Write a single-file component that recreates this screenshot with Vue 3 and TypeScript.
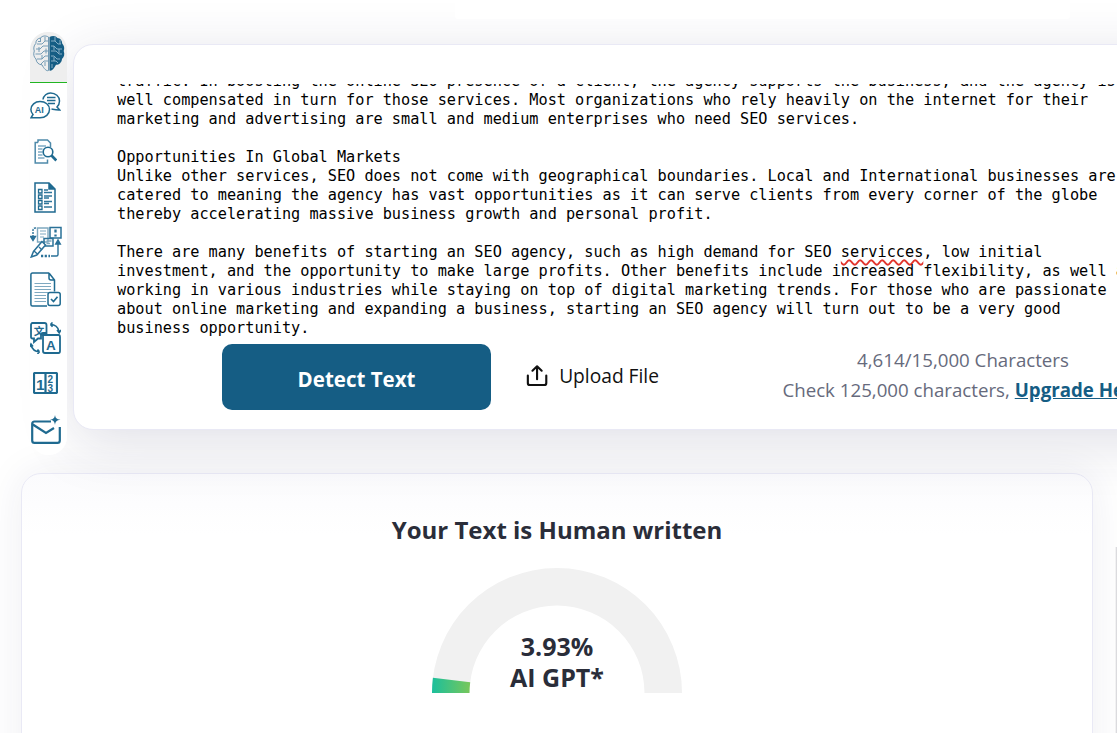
<script setup lang="ts">
const gaugeValue = 3.93
</script>

<template>
  <div class="page">
    <div class="topstrip"></div>
    <div class="edge"></div>
    <div class="top-row">
      <aside class="rail">
        <div class="logo-tab">
          <svg class="logo" viewBox="0 0 32 37" fill="none">
            <path d="M15.500 2C12.500 .3 9 .8 7.500 3C4.500 3.300 2.800 5.500 2.800 8.500C.8 10.500 .3 13.500 1.300 16C.1 19 .8 22 3 24C3.300 27.500 5.800 29.800 9 29.800C10.800 33.500 13.500 36.500 15.500 35.500Z" stroke="#7199b3" stroke-width="1"/>
            <path d="M4 9H9L12 6H15M3 14H7L10 11H15M2.500 19H8L11 16H15M4 24H9L12 21H15M8 29L11 26H15M7.500 3V7M12 2V6M6 12V17M9 20V24M12 27V31M5 6.500H7M13 13.500V18.500" stroke="#7199b3" stroke-width=".95"/>
            <path d="M16.500 2C19.500 .3 23 .8 24.500 3C27.500 3.300 29.200 5.500 29.200 8.500C31.200 10.500 31.700 13.500 30.700 16C31.900 19 31.200 22 29 24C28.700 27.500 26.200 29.800 23 29.800C21.200 33.500 18.500 36.500 16.500 35.500Z" fill="#155d84"/>
            <path d="M18 6H22L25 9H28M18 11H21L24 14H29M18 16H23L26 19H29M18 21H21L24 24H27M18 26H23L25 28M22 2V6M27 5V9M21 11V15M26 14V18M21 22V26M19 29V33" stroke="#9dbfd2" stroke-width=".85"/>
          </svg>
        </div>
        <svg class="ico i-ai" viewBox="0 0 31 27" fill="none" stroke="#1f6a90" stroke-width="1.500">
          <path d="M13 7.500C13.500 3.500 17 1 20.500 1C25.500 1 29.500 4.500 29.500 9C29.500 11.500 28.500 13.500 27 15L29.800 18C26.500 18.200 24 17.500 21.500 17" />
          <path d="M17 5.500H25.500M17 8.500H25.500M18 11.500H25" stroke-width="1.400" />
          <path d="M10 9.500C15.500 9.500 19.500 12.800 19.500 17.500C19.500 22 15.500 25.800 10 25.800H1L3 22.500C1.500 21 .9 19.500 .9 17.500C.9 13 5 9.500 10 9.500Z" />
          <text x="4.700" y="21" font-size="9" font-weight="700" fill="#1f6a90" stroke="none" font-family="Liberation Sans, sans-serif">AI</text>
        </svg>
        <svg class="ico i-search" viewBox="0 0 23 25" fill="none" stroke="#4f8aaa" stroke-width="1.500">
          <path d="M4 3.500V1H13.500L16.500 4V8M4 3.500H1.200V24H13.500V20.500" />
          <path d="M4 7H12M4 10H8.500M4 13H8.500M4 16H8.500M4 19H10.500" stroke="#7fabc3" stroke-width="1.300" />
          <circle cx="14" cy="13" r="4.800" stroke="#1f6a90" stroke-width="1.600" />
          <path d="M17.500 16.500L22.300 21.500" stroke="#1f6a90" stroke-width="2.600" />
        </svg>
        <svg class="ico i-list" viewBox="0 0 22 31" fill="none" stroke="#1f6a90" stroke-width="1.500">
          <path d="M1 1H15L21 7V30H1Z" />
          <path d="M15 1V7H21" fill="#1f6a90" />
          <path d="M4.500 7.500H8V11H4.500ZM4.500 13H8V16.500H4.500ZM4.500 18.500H8V22H4.500ZM4.500 24H8V27.500H4.500Z" stroke-width="1.300" />
          <path d="M10 8H14M10 10.500H18M10 14H18M10 16H15M10 19.500H18M10 21.500H15M10 25H18" stroke="#2f769b" stroke-width="1.300" />
        </svg>
        <svg class="ico i-flow" viewBox="0 0 32 32" fill="none" stroke="#2a7198" stroke-width="1.400">
          <path d="M3 11V4C3 3 3.800 2 5 2H7" stroke-dasharray="2 1" />
          <path d="M.5 10.500L3 14.500L5.500 10.500Z" fill="#2a7198" />
          <path d="M7.500 2H18V16H7.500Z" stroke="#7fa9c0" />
          <path d="M10 5H16M10 8H16M10 11H14" stroke="#a9c6d6" stroke-width="1.600" />
          <path d="M20 1.500H31V12H20Z" stroke-width="1.500" />
          <path d="M25.500 3.500V6.500M25.500 8.500V10.500" stroke-width="2.300" />
          <path d="M14 12.500H23V20H14Z" stroke-width="1.500" />
          <path d="M16.500 15H21.500M16.500 17.500H20" stroke="#7fa9c0" />
          <path d="M12 15.500L3.500 25.500L1.200 31L6.800 29L15.500 19Z" stroke-width="1.500" fill="#fff" />
          <path d="M4 25L8 28.500M9 21L12 24" />
          <path d="M28 17V28.500C28 29.500 27.500 30 26.500 30H21" />
          <path d="M25.700 18L28 14L30.300 18Z" fill="#2a7198" />
          <path d="M11 30H20" stroke-width="2.600" stroke-dasharray="2.200 1.500" />
        </svg>
        <svg class="ico i-check" viewBox="0 0 31 35" fill="none" stroke="#1f6a90" stroke-width="1.500">
          <path d="M19 1H2.500C1.500 1 .9 1.800 .9 2.800V32.500C.9 33.400 1.500 34 2.500 34H17" />
          <path d="M19 1L24.500 8V19.500M19 1V6C19 7.200 19.800 8 21 8H24.500" />
          <path d="M4.500 11.500H21M4.500 14.500H21M4.500 17.500H21M4.500 20.500H18M4.500 23.500H16M4.500 26.500H16M4.500 29.500H16" stroke="#7fa9c0" stroke-width="1.100" />
          <rect x="18" y="20.500" width="12.200" height="13" rx="2" />
          <path d="M21 27L23.500 29.500L27.500 24.800" stroke-width="1.700" />
        </svg>
        <svg class="ico i-trans" viewBox="0 0 31 32" fill="none" stroke="#1f6a90" stroke-width="1.800">
          <path d="M2.500 1H14.500C15.500 1 16.500 2 16.500 3V11H13C12 11 11 12 11 13V16.500H8L4 20V16.500H2.500C1.500 16.500 1 16 1 15V3C1 2 1.500 1 2.500 1Z" />
          <text x="3.800" y="13" font-size="10.500" font-weight="700" fill="#1f6a90" stroke="none" font-family="Noto Sans CJK SC, sans-serif">文</text>
          <path d="M13 13H28.500C29.500 13 30 14 30 15V29C30 30 29.500 31 28.500 31H15C14 31 13 30 13 29Z" />
          <text x="16" y="27.500" font-size="13.500" font-weight="700" fill="#1f6a90" stroke="none" font-family="Liberation Sans, sans-serif">A</text>
          <path d="M20.500 2.500C24.500 2.500 28 5 29 9.500M27 8L29.200 10.800L31 8M20.500 2.500L22.500 .5M20.500 2.500L22.500 4.800" stroke-width="1.600" />
          <path d="M1 23C2 27 5 29.500 9.500 29.800M-.4 25L1 22L3 24.500M9.500 29.800L7.500 27.500M9.500 29.800L7.500 32" stroke-width="1.600" />
        </svg>
        <svg class="ico i-num" viewBox="0 0 25 22" fill="none" stroke="#1f6a90" stroke-width="2.200">
          <rect x="1" y="1" width="23" height="20" rx="1" />
          <path d="M12.500 1V21" />
          <text x="3" y="18" font-size="15.500" font-weight="700" fill="#1f6a90" stroke="none" font-family="Liberation Sans, sans-serif">1</text>
          <text x="14.500" y="11" font-size="10" fill="#1f6a90" stroke="none" font-weight="700" font-family="Liberation Sans, sans-serif">2</text>
          <text x="14.500" y="20" font-size="10" fill="#1f6a90" stroke="none" font-weight="700" font-family="Liberation Sans, sans-serif">3</text>
        </svg>
        <svg class="ico i-mail" viewBox="0 0 30 29" fill="none" stroke="#1f6a90" stroke-width="2.200">
          <path d="M20 6.500H3.500C2 6.500 1.200 7.500 1.200 9V25.500C1.200 27 2 27.900 3.500 27.900H26.500C28 27.900 28.800 27 28.800 25.500V12" />
          <path d="M1.800 9.500L15 18L23 13" />
          <path d="M24 0C24.500 3 25.500 4 29.500 4.800C25.500 5.500 24.500 6.500 24 10C23.500 6.500 22.500 5.500 19 4.800C22.500 4 23.500 3 24 0Z" fill="#1f6a90" stroke="none" />
        </svg>
      </aside>

      <section class="editor-card">
        <div class="editor"><pre class="text">traffic. In boosting the online SEO presence of a client, the agency supports the business, and the agency is
well compensated in turn for those services. Most organizations who rely heavily on the internet for their
marketing and advertising are small and medium enterprises who need SEO services.

Opportunities In Global Markets
Unlike other services, SEO does not come with geographical boundaries. Local and International businesses are
catered to meaning the agency has vast opportunities as it can serve clients from every corner of the globe
thereby accelerating massive business growth and personal profit.

There are many benefits of starting an SEO agency, such as high demand for SEO <span class="typo">servicces</span>, low initial
investment, and the opportunity to make large profits. Other benefits include increased flexibility, as well as
working in various industries while staying on top of digital marketing trends. For those who are passionate
about online marketing and expanding a business, starting an SEO agency will turn out to be a very good
business opportunity.</pre></div>
        <div class="actions">
          <button class="detect">Detect Text</button>
          <div class="upload">
            <svg class="up-ico" viewBox="0 0 24 24" fill="none" stroke="#111" stroke-width="2.300" stroke-linecap="round" stroke-linejoin="round">
              <path d="M2 12V20C2 21.500 3 22.300 4.300 22.300H19.700C21 22.300 22 21.500 22 20V12" />
              <path d="M12 16V2M7 6.800L12 2L17 6.800" />
            </svg>
            <span>Upload File</span>
          </div>
          <div class="stats">
            <div>4,614/15,000 Characters</div>
            <div class="stats-2">Check 125,000 characters, <a class="upgrade">Upgrade Here</a></div>
          </div>
        </div>
      </section>
    </div>

    <section class="result-card">
      <h2 class="title">Your Text is Human written</h2>
      <div class="gauge">
        <svg width="250" height="125" viewBox="0 0 250 125">
          <defs>
            <linearGradient id="gaugeFill" x1="0" x2="1" y1="0" y2="0">
              <stop offset="0" stop-color="#1bbf9c" />
              <stop offset="1" stop-color="#78c75a" />
            </linearGradient>
          </defs>
          <path d="M0 125A125 125 0 0 1 250 125H212.500A87.500 87.500 0 0 0 37.500 125Z" fill="#f1f1f1" />
          <path d="M0 125A125 125 0 0 1 .9 109.800L38.200 114.300A87.500 87.500 0 0 0 37.500 125Z" fill="url(#gaugeFill)" />
        </svg>
        <div class="gauge-label">
          <div>{{ gaugeValue }}%</div>
          <div>AI GPT*</div>
        </div>
      </div>
    </section>
  </div>
</template>

<style>
html, body { margin: 0; background: #fff; }
</style>

<style scoped>
.page {
  position: relative;
  width: 1117px;
  height: 733px;
  overflow: hidden;
  background: #fff;
  font-family: "Open Sans", "Noto Sans", sans-serif;
}
.topstrip {
  position: absolute;
  left: 455px;
  top: 0;
  width: 615px;
  height: 19px;
  background: #fff;
  border-radius: 0 0 3px 3px;
  z-index: 3;
}
.edge {
  position: absolute;
  right: 0;
  top: 547px;
  width: 2px;
  height: 186px;
  background: linear-gradient(90deg, rgba(200, 200, 205, 0), #cfcfd4);
  z-index: 3;
}
.top-row {
  display: flex;
  align-items: flex-start;
  padding: 32px 0 0 30px;
  gap: 6px;
}
.rail {
  position: relative;
  z-index: 2;
  flex: none;
  width: 37px;
  height: 423px;
  background: #fff;
  border-radius: 18px;
  display: flex;
  flex-direction: column;
  align-items: flex-start;
}
.logo-tab {
  width: 37px;
  height: 51px;
  background: #eeeeee;
  border-bottom: 1px solid #22b522;
  border-radius: 18px 18px 0 0;
  padding: 3px 0 0 3px;
  box-sizing: border-box;
}
.logo { display: block; width: 32px; height: 37px; }
.ico { display: block; flex: none; }
.i-ai { width: 31px; height: 27px; margin: 9px 0 0 0; }
.i-search { width: 23px; height: 25px; margin: 20px 0 0 4px; }
.i-list { width: 22px; height: 31px; margin: 18px 0 0 4px; }
.i-flow { width: 32px; height: 32px; margin: 13px 0 0 0; }
.i-check { width: 31px; height: 35px; margin: 14px 0 0 0; }
.i-trans { width: 31px; height: 32px; margin: 15px 0 0 0; }
.i-num { width: 25px; height: 22px; margin: 18px 0 0 3px; }
.i-mail { width: 30px; height: 29px; margin: 21px 0 0 1px; }

.editor-card {
  position: relative;
  z-index: 1;
  flex: none;
  width: 1200px;
  height: 386px;
  margin-top: 12px;
  box-sizing: border-box;
  padding: 39px 0 0 43px;
  background: #fff;
  border: 1px solid #e9e9f5;
  border-radius: 20px;
  box-shadow: 0 12px 56px rgba(40, 40, 90, 0.15);
}
.editor {
  height: 254px;
  display: flex;
  flex-direction: column;
  justify-content: flex-end;
  overflow: hidden;
}
.text {
  margin: 0;
  font-family: "DejaVu Sans Mono", monospace;
  font-size: 15.22px;
  line-height: 19px;
  color: #000;
  white-space: pre;
}
.typo {
  text-decoration: underline wavy #e2342c 1.5px;
  text-underline-offset: 2px;
}
.actions {
  display: flex;
  align-items: flex-start;
  margin: 6px 0 0 105px;
}
.detect {
  flex: none;
  width: 269px;
  height: 66px;
  border: none;
  border-radius: 10px;
  background: #155d84;
  color: #fff;
  font-family: inherit;
  font-size: 20.500px;
  font-weight: 700;
  padding: 3px 0 0;
}
.upload {
  flex: none;
  display: flex;
  align-items: center;
  gap: 11px;
  width: 133px;
  height: 62px;
  margin-left: 35px;
  font-size: 19.200px;
  color: #111;
  white-space: nowrap;
}
.up-ico { width: 23px; height: 23px; }
.stats {
  flex: none;
  width: 364px;
  margin: 1px 0 0 122px;
  text-align: center;
  font-size: 18.700px;
  color: #666a7c;
  line-height: 30px;
  white-space: nowrap;
}
.upgrade {
  color: #155d84;
  font-weight: 700;
  text-decoration: underline;
}
.result-card {
  position: relative;
  margin: 18px 0 0 21px;
  width: 1072px;
  height: 400px;
  box-sizing: border-box;
  padding-top: 39px;
  background: linear-gradient(#fbfbfd, #fff 60px);
  border: 1px solid #e9e9f5;
  border-radius: 20px;
  display: flex;
  flex-direction: column;
  align-items: center;
  box-shadow: 0 0 40px rgba(40, 40, 90, 0.08);
}
.title {
  margin: 0;
  font-size: 24px;
  font-weight: 700;
  line-height: 34px;
  color: #2a2d39;
}
.gauge {
  position: relative;
  width: 250px;
  height: 125px;
  margin-top: 21px;
}
.gauge svg { display: block; }
.gauge-label {
  position: absolute;
  left: 0;
  right: 0;
  bottom: 0;
  text-align: center;
  font-size: 25px;
  font-weight: 700;
  line-height: 31px;
  color: #2a2d39;
}
</style>
